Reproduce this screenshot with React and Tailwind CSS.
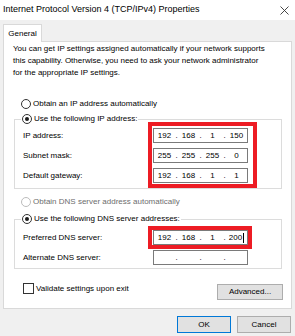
import React from "react";

function Radio({ checked, disabled }) {
  return (
    <span
      className={`w-[10px] h-[10px] rounded-full border bg-white flex items-center justify-center shrink-0 ${
        disabled ? "border-[#bcbcbc]" : "border-[#333333]"
      }`}
    >
      {checked && <span className="w-[4px] h-[4px] rounded-full bg-[#1a1a1a]" />}
    </span>
  );
}

function IpInput({ parts, caret }) {
  return (
    <div className="w-[95px] h-[15px] border border-[#7a7a7a] bg-white flex items-center text-[8px] leading-none">
      {parts.map((p, i) => (
        <React.Fragment key={i}>
          <span className="flex-1 text-center">
            {p}
            {caret && i === 3 && <span className="inline-block w-px h-[10px] bg-black align-middle ml-px" />}
          </span>
          {i < 3 && <span className="w-[3px] text-center">.</span>}
        </React.Fragment>
      ))}
    </div>
  );
}

export default function App() {
  return (
    <div
      className="w-[295px] h-[336px] bg-[#f0f0f0] text-black text-[8px] overflow-hidden flex flex-col"
      style={{ fontFamily: '"Liberation Sans", Arial, sans-serif' }}
    >
      {/* Title bar */}
      <div className="h-[20px] bg-white flex items-center justify-between pl-[3px] pr-[6px] shrink-0">
        <span className="text-[9px]">Internet Protocol Version 4 (TCP/IPv4) Properties</span>
        <svg width="9" height="9" viewBox="0 0 9 9" className="text-[#333]">
          <path d="M0.5 0.5 L8.5 8.5 M8.5 0.5 L0.5 8.5" stroke="currentColor" strokeWidth="0.9" />
        </svg>
      </div>

      {/* Tab */}
      <div className="pl-[3px] pt-[4px] shrink-0">
        <div className="relative z-10 -mb-px w-[39px] h-[18px] bg-white border border-b-0 border-[#d9d9d9] flex items-center justify-center">
          General
        </div>
      </div>

      {/* Panel */}
      <div className="mx-[3px] h-[268px] bg-white border border-[#d9d9d9] pl-[9px] pr-[8px] flex flex-col shrink-0">
        <p className="leading-[12px] pt-[1px]">
          You can get IP settings assigned automatically if your network supports
          <br />
          this capability. Otherwise, you need to ask your network administrator
          <br />
          for the appropriate IP settings.
        </p>

        <div className="mt-[19px] h-[12px] flex items-center gap-[2px] pl-[8px]">
          <Radio />
          <span>Obtain an IP address automatically</span>
        </div>

        {/* Group 1 */}
        <div className="mt-[9px] ml-px w-[268px] border border-[#dcdcdc] flex flex-col">
          <div className="-mt-[7px] ml-[6px] h-[12px] w-fit bg-white px-px flex items-center gap-[2px]">
            <Radio checked />
            <span>Use the following IP address:</span>
          </div>
          <div className="-mt-[3px] flex pl-[8px]">
            <div className="w-[125px] flex flex-col gap-[5px] pt-[6px]">
              <div className="h-[15px] flex items-center">IP address:</div>
              <div className="h-[15px] flex items-center">Subnet mask:</div>
              <div className="h-[15px] flex items-center">Default gateway:</div>
            </div>
            <div className="w-[109px] border-[4px] border-[#ed1c24] pl-px pt-[2px] pb-px flex flex-col gap-[5px]">
              <IpInput parts={["192", "168", "1", "150"]} />
              <IpInput parts={["255", "255", "255", "0"]} />
              <IpInput parts={["192", "168", "1", "1"]} />
            </div>
          </div>
        </div>

        <div className="mt-[7px] h-[12px] flex items-center gap-[2px] pl-[8px] text-[#6d6d6d]">
          <Radio disabled />
          <span>Obtain DNS server address automatically</span>
        </div>

        {/* Group 2 */}
        <div className="mt-[11px] ml-px w-[268px] border border-[#dcdcdc] flex flex-col pb-[3px]">
          <div className="-mt-[7px] ml-[6px] h-[12px] w-fit bg-white px-px flex items-center gap-[2px]">
            <Radio checked />
            <span>Use the following DNS server addresses:</span>
          </div>
          <div className="mt-px flex items-center pl-[8px]">
            <div className="w-[125px]">Preferred DNS server:</div>
            <div className="border-[4px] border-[#ed1c24] pl-px">
              <IpInput parts={["192", "168", "1", "200"]} caret />
            </div>
          </div>
          <div className="mt-px flex items-center pl-[8px]">
            <div className="w-[130px]">Alternate DNS server:</div>
            <IpInput parts={["", "", "", ""]} />
          </div>
        </div>

        {/* Validate + Advanced */}
        <div className="mt-[14px] flex items-start justify-between">
          <label className="flex items-center gap-[2px] pl-[10px] h-[11px]">
            <span className="w-[11px] h-[11px] border border-[#333] bg-white" />
            <span>Validate settings upon exit</span>
          </label>
          <button className="mt-px w-[66px] h-[16px] bg-[#e1e1e1] border border-[#adadad] flex items-center justify-center">
            Advanced...
          </button>
        </div>
      </div>

      {/* Dialog buttons */}
      <div className="mt-[7px] flex justify-end gap-[6px] pr-[4px]">
        <button className="w-[54px] h-[17px] bg-[#e1e1e1] border border-[#0078d7] flex items-center justify-center">
          OK
        </button>
        <button className="w-[54px] h-[17px] bg-[#e1e1e1] border border-[#adadad] flex items-center justify-center">
          Cancel
        </button>
      </div>
    </div>
  );
}
